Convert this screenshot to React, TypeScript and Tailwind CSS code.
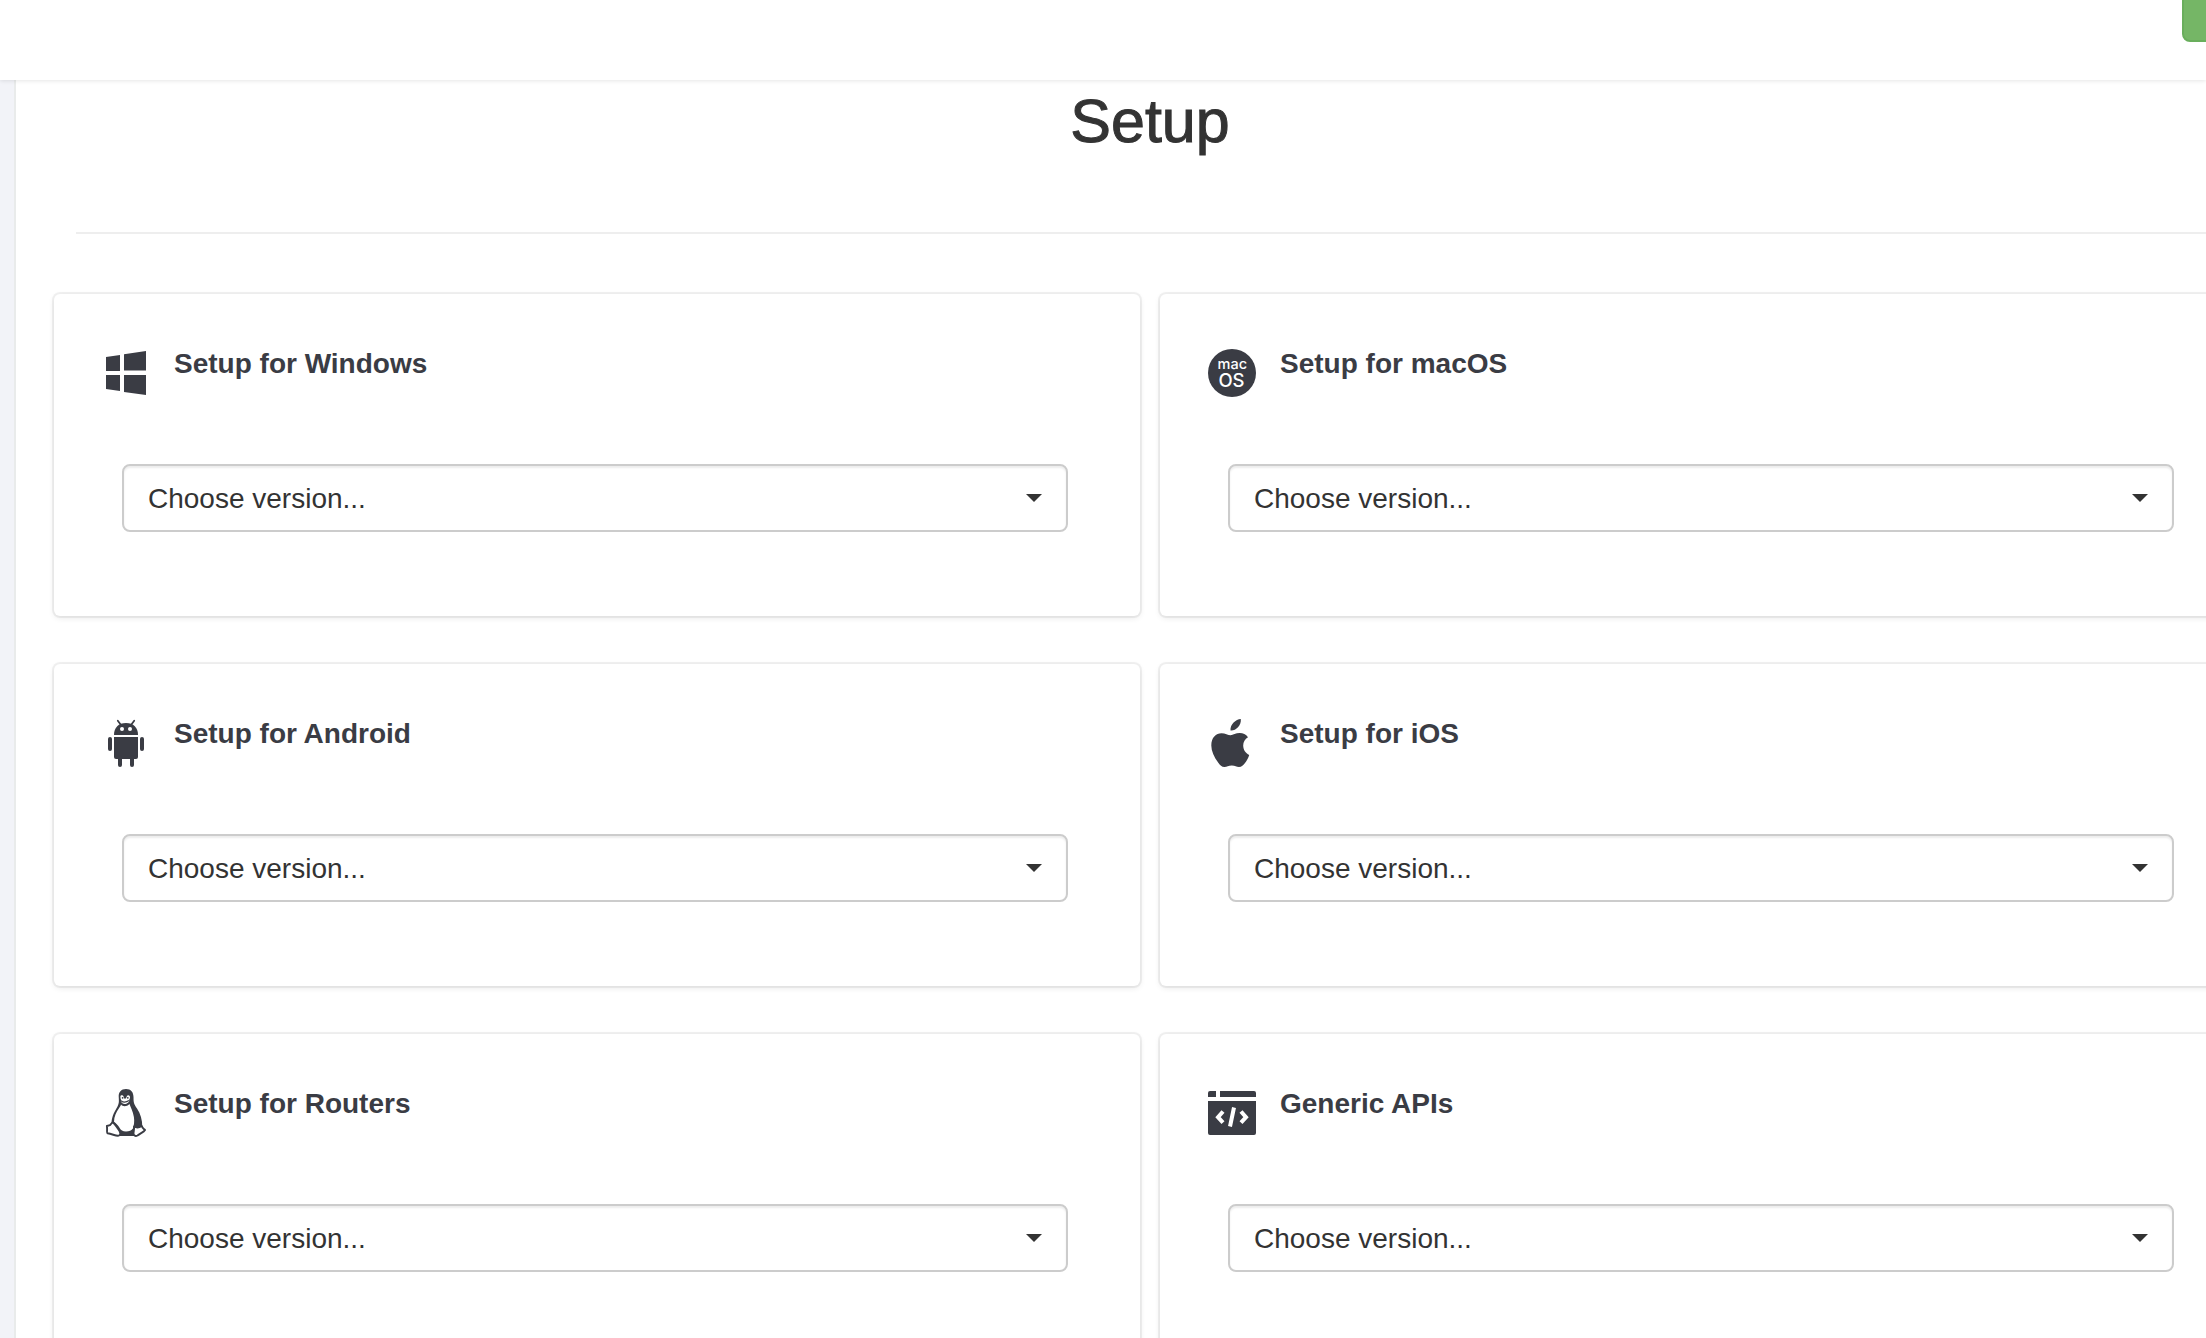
import type { ReactNode } from "react";

const WindowsIcon = () => (
  <svg viewBox="0 0 48 48" className="size-12 shrink-0 fill-current" aria-hidden="true">
    <path d="M4 8 18 6V22H4ZM22 5.300 44 2V21.500H22ZM4 26H18V42L4 40ZM22 26H44V46L22 43Z" />
  </svg>
);

const MacIcon = () => (
  <svg viewBox="0 0 48 48" className="size-12 shrink-0" aria-hidden="true">
    <circle cx="24" cy="24" r="24" className="fill-current" />
    <g fill="#fff" fontFamily="Inter, sans-serif" fontWeight="500" textAnchor="middle">
      <text x="24.300" y="20" fontSize="14.500">mac</text>
      <text x="23.500" y="37.800" fontSize="18.500">OS</text>
    </g>
  </svg>
);

const AndroidIcon = () => (
  <svg viewBox="0 0 48 48" className="size-12 shrink-0 fill-current" aria-hidden="true">
    <path d="M15.800 1.800 19 6M32.200 1.800 29 6" stroke="currentColor" strokeWidth="1.800" strokeLinecap="round" />
    <path d="M12 16C12 8.500 16.500 4 24 4S36 8.500 36 16Z" />
    <path d="M12 18H36V38a2 2 0 0 1-2 2H14a2 2 0 0 1-2-2Z" />
    <rect x="6" y="18" width="4" height="14" rx="2" />
    <rect x="38" y="18" width="4" height="14" rx="2" />
    <rect x="16" y="36" width="4" height="12" rx="2" />
    <rect x="28" y="36" width="4" height="12" rx="2" />
    <circle cx="20" cy="10" r="2" fill="#fff" />
    <circle cx="28" cy="10" r="2" fill="#fff" />
  </svg>
);

const AppleIcon = () => (
  <svg viewBox="0 0 48 48" className="size-12 shrink-0 fill-current" aria-hidden="true">
    <path d="M32.800 0C33.200 3 32 6 30 8.200C28 10.400 25.200 11.800 22.500 11.500C22.200 8.500 23.600 5.600 25.600 3.600C27.500 1.600 30.400 .200 32.800 0Z" />
    <path d="M40 18.200C37 20 35.200 23 35.200 26.600C35.200 30.800 37.600 34.400 41.200 36C40.300 39 38.800 41.600 37 44C35.400 46.200 33.600 48 31 48C28.300 48 27.300 46.600 23.800 46.600C20.300 46.600 19 48 16.400 48C13.800 48 12 46 10.300 43.700C6 38 3.300 32 3.300 26.400C3.300 18.500 8 14.200 13.500 14.200C17.200 14.200 20 16.200 22.600 16.200C25 16.200 27.600 14 31.800 14C35 14 38 15.400 40 18.200Z" />
  </svg>
);

const PenguinIcon = () => (
  <svg viewBox="0 0 48 48" className="size-12 shrink-0 fill-current" aria-hidden="true">
    <path d="M24 0C19 0 16.600 3.200 16.700 7.500C16.900 12 17.300 14 15.500 17.500C13 22 10 26.500 9.500 33.500L17 47H33L40.300 38C40.300 31 38.500 24.500 35 19.500C31.500 14.500 31.600 13 31.500 8C31.400 3.200 29 0 24 0Z" />
    <path d="M19 15.500C20.500 17.500 24.500 18 27.500 15C28.500 18 31 22.500 31.900 28C32.600 32 32 37 30.900 39.500C29.800 41.500 27 42.500 24 42.500C20.500 42.500 19 41.500 17.500 38.800C16.200 36.300 14 34.300 12 32.800C12 27.500 14.400 23 16.800 19.500C18 17.700 18.700 16.800 19 15.500Z" fill="#fff" />
    <path d="M18.400 7.500C18.400 5.800 20.900 5.600 21.600 7.600L22 9.500H24L24.700 7.400C25.500 5.400 28 6 28 8.300C28 9.500 27.500 10.300 27 11C28 12.500 26 14.300 23.500 15C21.500 15.500 19.500 14 18.800 12.300C19.200 11.500 19.300 11 18.800 10.300C18.400 9.500 18.400 8.500 18.400 7.500Z" fill="#fff" />
    <path d="M19 11.800C21 13.500 24.500 13.300 27 11.600" fill="none" stroke="currentColor" strokeWidth="1.200" />
    <circle cx="20.600" cy="8.800" r=".9" />
    <circle cx="25.800" cy="8.800" r=".9" />
    <g fill="#fff" stroke="currentColor" strokeWidth="1.900" strokeLinejoin="round">
      <path d="M4.900 37L8 36.200L10.300 33.500C13 34 14.500 38 16.500 40.500C18.500 43 19 45.500 17 46.500C15 47.600 10.500 45 5.600 44.300C4.400 43.800 5.500 41.500 4.900 37Z" />
      <path d="M32 37.500C34.500 39 37 38.800 39.800 37C40.300 39.200 41.500 39.500 43 41C42 43 38.500 44.300 35.500 46.500C33.500 47.500 31.500 46.800 31.500 44.500C31.500 42 32.400 40.500 32 37.500Z" />
    </g>
  </svg>
);

const CodeIcon = () => (
  <svg viewBox="0 0 48 48" className="size-12 shrink-0 fill-current" aria-hidden="true">
    <path d="M2 2H8V8H0V4A2 2 0 0 1 2 2ZM12 2H46A2 2 0 0 1 48 4V8H12ZM0 12H48V44A2 2 0 0 1 46 46H2A2 2 0 0 1 0 44Z" />
    <path d="M15 22.500 10 28.200 15 33.700M26 18.500 22 37.500M33 22.500 38 28.200 33 33.700" fill="none" stroke="#fff" strokeWidth="4" />
  </svg>
);

type Platform = { id: string; title: string; icon: ReactNode };

const platforms: Platform[] = [
  { id: "windows", title: "Setup for Windows", icon: <WindowsIcon /> },
  { id: "macos", title: "Setup for macOS", icon: <MacIcon /> },
  { id: "android", title: "Setup for Android", icon: <AndroidIcon /> },
  { id: "ios", title: "Setup for iOS", icon: <AppleIcon /> },
  { id: "routers", title: "Setup for Routers", icon: <PenguinIcon /> },
  { id: "apis", title: "Generic APIs", icon: <CodeIcon /> },
];

function SetupCard({ id, title, icon }: Platform) {
  return (
    <section className="rounded-md bg-white pt-[55px] pb-[84px] shadow-[0_0_0_2px_rgba(0,0,0,0.05),0_2px_6px_rgba(0,0,0,0.09)]">
      <div className="flex items-start gap-6 px-12 text-[#3a3c44]">
        {icon}
        <h2 className="text-[28px] leading-[30px] font-bold">
          <label htmlFor={id}>{title}</label>
        </h2>
      </div>
      <div className="relative mt-[67px] mr-[72px] ml-[68px]">
        <select
          id={id}
          defaultValue=""
          className="block h-[68px] w-full appearance-none rounded-lg border-2 border-[#ccc] bg-white px-6 pt-0.5 text-[28px] text-[#333] shadow-[inset_0_2px_2px_rgba(0,0,0,0.075)]"
        >
          <option value="">Choose version...</option>
        </select>
        <svg
          viewBox="0 0 16 8"
          className="pointer-events-none absolute top-[30px] right-[26px] h-2 w-4 fill-[#333]"
          aria-hidden="true"
        >
          <path d="M0 0H16L8 8Z" />
        </svg>
      </div>
    </section>
  );
}

export default function App() {
  return (
    <div className="flex h-screen flex-col overflow-hidden bg-[#f2f3f8] font-['Liberation_Sans',Arial,sans-serif]">
      <header className="z-10 flex h-20 shrink-0 items-start justify-end bg-white shadow-[0_1px_4px_rgba(0,0,0,0.1)]">
        <button
          type="button"
          aria-label="Account"
          className="-mt-[26px] -mr-[176px] h-[68px] w-[200px] shrink-0 rounded-lg border-2 border-[#69ae5c] bg-[#75b666]"
        />
      </header>
      <main className="-mr-20 ml-[14px] grow border-x-2 border-[#e9ebeb] bg-white px-[38px]">
        <h1 className="pt-2 text-center text-[61px] leading-[66px] text-[#333] [-webkit-text-stroke:1px_#333]">
          Setup
        </h1>
        <hr className="mx-[22px] mt-[78px] mb-[60px] border-t-2 border-[#eee]" />
        <div className="grid grid-cols-2 gap-x-5 gap-y-12">
          {platforms.map((p) => (
            <SetupCard key={p.id} {...p} />
          ))}
        </div>
      </main>
    </div>
  );
}
